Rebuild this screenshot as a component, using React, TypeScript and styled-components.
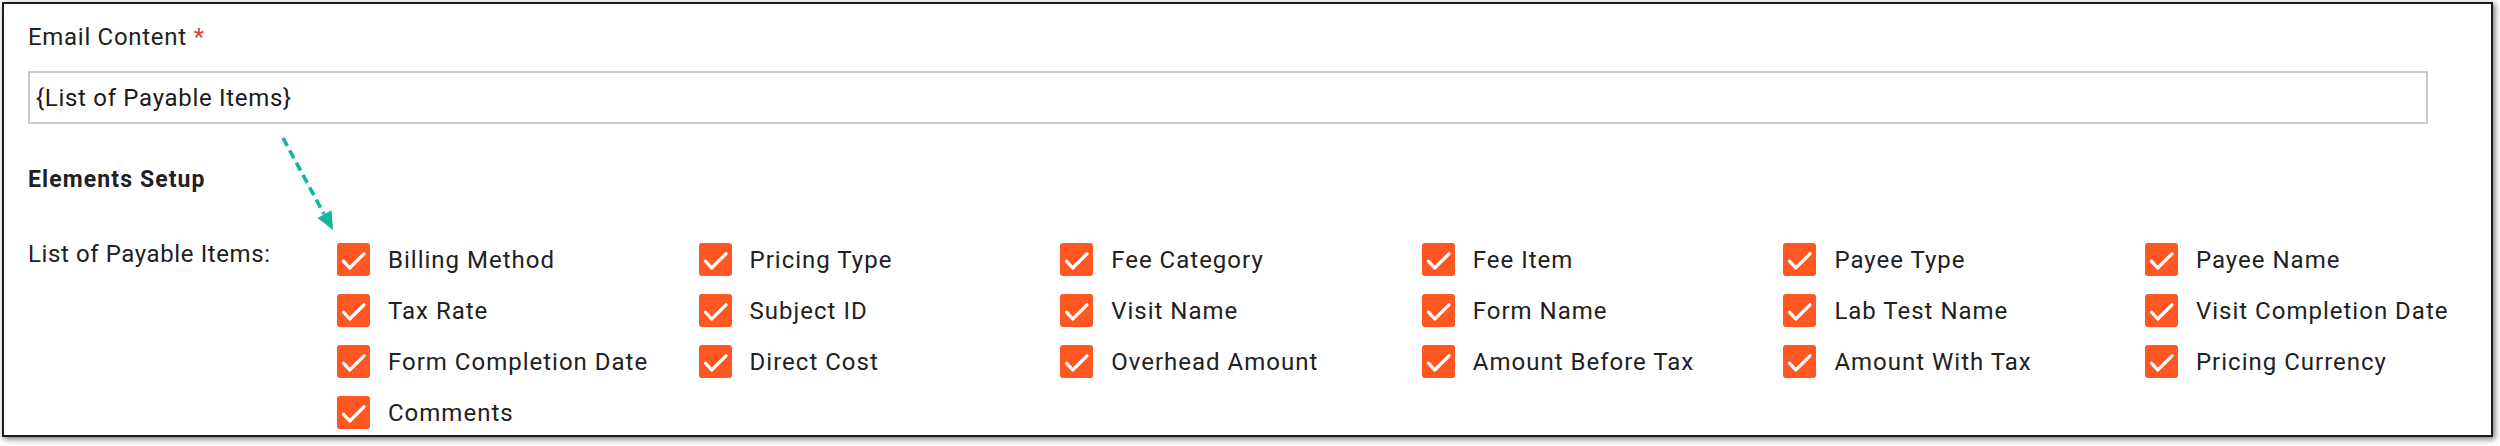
import React from "react";
import styled, { createGlobalStyle } from "styled-components";

const GlobalStyle = createGlobalStyle`
  html, body {
    margin: 0;
    padding: 0;
    background: #ffffff;
  }
  body {
    font-family: Roboto, "Liberation Sans", Arial, sans-serif;
    color: #212121;
  }
`;

const Page = styled.div`
  position: relative;
  width: 2500px;
  height: 446px;
  overflow: hidden;
`;

const Frame = styled.section`
  box-sizing: border-box;
  width: 2491px;
  margin: 2px 0 0 2px;
  padding: 19px 24px 6px 24px;
  border: 2px solid #1c1c1c;
  background: #ffffff;
  box-shadow: 2px 2px 6px rgba(0, 0, 0, 0.55);
`;

const FieldLabel = styled.div`
  font-size: 24px;
  line-height: 28px;
  letter-spacing: 0.7px;
  color: #212121;
`;

const Required = styled.span`
  color: #e53935;
  margin-left: 7px;
`;

const TextBox = styled.div`
  box-sizing: border-box;
  width: 2400px;
  height: 53px;
  margin-top: 20px;
  padding: 0 6px;
  display: flex;
  align-items: center;
  border: 2px solid #cbcbcb;
  font-size: 24px;
  line-height: 28px;
  letter-spacing: 0.7px;
  color: #1a1a1a;
`;

const SectionTitle = styled.h3`
  margin: 42px 0 0 0;
  font-size: 23px;
  line-height: 28px;
  font-weight: 700;
  letter-spacing: 1.1px;
  color: #212121;
`;

const ListRow = styled.div`
  display: grid;
  grid-template-columns: 309px 1fr;
  align-items: start;
  margin-top: 46px;
`;

const ListLabel = styled.div`
  font-size: 24px;
  line-height: 28px;
  letter-spacing: 0.6px;
`;

const OptionsGrid = styled.div`
  display: grid;
  grid-template-columns: repeat(6, 361.6px);
  row-gap: 18px;
  padding-top: 3px;
`;

const Option = styled.label`
  display: flex;
  align-items: center;
  gap: 18px;
  height: 33px;
  white-space: nowrap;
`;

const Box = styled.span`
  flex: 0 0 auto;
  width: 33px;
  height: 33px;
  border-radius: 3px;
  background: #ff5722;
  display: flex;
  align-items: center;
  justify-content: center;
`;

const OptionText = styled.span`
  font-size: 24px;
  line-height: 28px;
  letter-spacing: 1px;
  color: #212121;
`;

const Annotation = styled.svg`
  position: absolute;
  left: 0;
  top: 0;
  pointer-events: none;
`;

const items = [
  "Billing Method",
  "Pricing Type",
  "Fee Category",
  "Fee Item",
  "Payee Type",
  "Payee Name",
  "Tax Rate",
  "Subject ID",
  "Visit Name",
  "Form Name",
  "Lab Test Name",
  "Visit Completion Date",
  "Form Completion Date",
  "Direct Cost",
  "Overhead Amount",
  "Amount Before Tax",
  "Amount With Tax",
  "Pricing Currency",
  "Comments",
];

const Check = () => (
  <svg width="33" height="33" viewBox="0 0 33 33">
    <path
      d="M6.5 18.2 L12.7 25 L27 10.8"
      fill="none"
      stroke="#ffffff"
      strokeWidth="3.2"
      strokeLinecap="round"
      strokeLinejoin="round"
    />
  </svg>
);

export default function App() {
  return (
    <>
      <GlobalStyle />
      <Page>
        <Frame>
          <FieldLabel>
            Email Content<Required>*</Required>
          </FieldLabel>
          <TextBox>{"{List of Payable Items}"}</TextBox>
          <SectionTitle>Elements Setup</SectionTitle>
          <ListRow>
            <ListLabel>List of Payable Items:</ListLabel>
            <OptionsGrid>
              {items.map((it) => (
                <Option key={it}>
                  <Box>
                    <Check />
                  </Box>
                  <OptionText>{it}</OptionText>
                </Option>
              ))}
            </OptionsGrid>
          </ListRow>
        </Frame>
        <Annotation width="400" height="260" viewBox="0 0 400 260">
          <line
            x1="283"
            y1="138"
            x2="324"
            y2="214"
            stroke="#18b39b"
            strokeWidth="3.6"
            strokeDasharray="9 5"
          />
          <polygon points="333,230 317.5,218 331.5,210.3" fill="#18b39b" />
        </Annotation>
      </Page>
    </>
  );
}
